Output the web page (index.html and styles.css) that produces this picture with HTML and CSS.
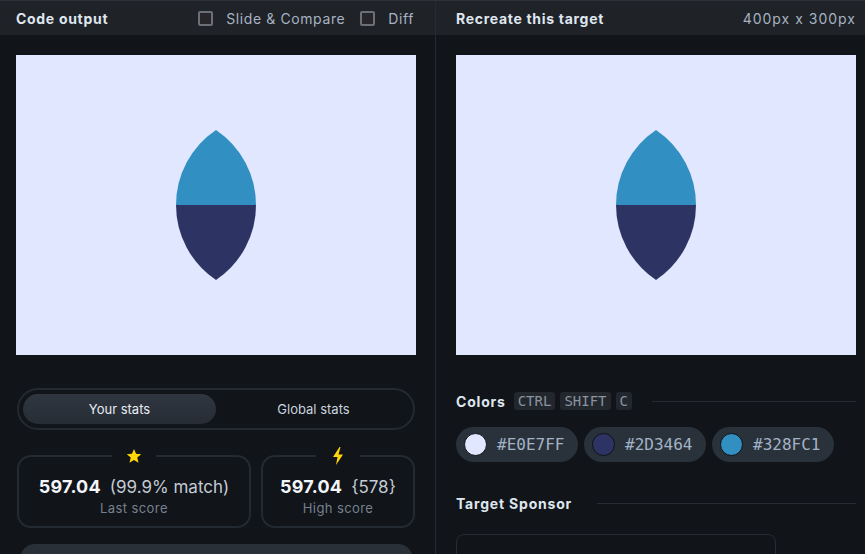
FILE: index.html
```html
<!DOCTYPE html>
<html>
<head>
<meta charset="utf-8">
<link rel="stylesheet" href="styles.css">
</head>
<body>
<div class="app">
  <section class="panel left">
    <header class="bar">
      <h2 class="title">Code output</h2>
      <div class="opts">
        <label class="opt"><span class="box"></span>Slide &amp; Compare</label>
        <label class="opt"><span class="box"></span>Diff</label>
      </div>
    </header>
    <div class="body">
      <div class="canvas">
        <svg class="leaf" width="80" height="150" viewBox="0 0 80 150">
          <path d="M40 0 A90.3 90.3 0 0 0 0 75 L80 75 A90.3 90.3 0 0 0 40 0 Z" fill="#328FC1"/>
          <path d="M0 75 A90.3 90.3 0 0 0 40 150 A90.3 90.3 0 0 0 80 75 Z" fill="#2D3464"/>
        </svg>
      </div>
      <div class="tabs">
        <div class="tab active">Your stats</div>
        <div class="tab">Global stats</div>
      </div>
      <div class="cards">
        <div class="card wide">
          <div class="badge">
            <svg width="16" height="16" viewBox="0 0 24 24"><path d="M12 1.5l3.1 7.2 7.7.6-5.9 5.1 1.8 7.6L12 17.9 5.3 22l1.8-7.6L1.2 9.3l7.7-.6z" fill="#FFD60A"/></svg>
          </div>
          <div class="score"><b>597.04</b><span>(99.9% match)</span></div>
          <div class="label">Last score</div>
        </div>
        <div class="card narrow">
          <div class="badge">
            <svg width="12" height="18" viewBox="0 0 12 18"><path d="M7.5 0 L1 10 H5.5 L4 18 L11 7.5 H6.5 L8.5 0 Z" fill="#FFD60A"/></svg>
          </div>
          <div class="score"><b>597.04</b><span>{578}</span></div>
          <div class="label">High score</div>
        </div>
      </div>
      <div class="more"></div>
    </div>
  </section>
  <section class="panel right">
    <header class="bar">
      <h2 class="title">Recreate this target</h2>
      <span class="dims">400px x 300px</span>
    </header>
    <div class="body">
      <div class="canvas">
        <svg class="leaf" width="80" height="150" viewBox="0 0 80 150">
          <path d="M40 0 A90.3 90.3 0 0 0 0 75 L80 75 A90.3 90.3 0 0 0 40 0 Z" fill="#328FC1"/>
          <path d="M0 75 A90.3 90.3 0 0 0 40 150 A90.3 90.3 0 0 0 80 75 Z" fill="#2D3464"/>
        </svg>
      </div>
      <div class="section-head colors-head">
        <h3>Colors</h3>
        <kbd>CTRL</kbd><kbd>SHIFT</kbd><kbd>C</kbd>
        <span class="rule"></span>
      </div>
      <div class="chips">
        <div class="chip"><span class="dot" style="background:#E0E7FF"></span>#E0E7FF</div>
        <div class="chip"><span class="dot" style="background:#2D3464"></span>#2D3464</div>
        <div class="chip"><span class="dot" style="background:#328FC1"></span>#328FC1</div>
      </div>
      <div class="section-head sponsor-head">
        <h3>Target Sponsor</h3>
        <span class="rule"></span>
      </div>
      <div class="sponsor"></div>
    </div>
  </section>
</div>
</body>
</html>
```
FILE: styles.css
```css
* { box-sizing: border-box; }
html, body { margin: 0; padding: 0; }
body {
  width: 865px;
  height: 554px;
  overflow: hidden;
  background: #111418;
  font-family: Inter, "Noto Sans", sans-serif;
  color: #dde4ee;
}
.app {
  display: flex;
  height: 554px;
  border-top: 1px solid #2c3038;
}
.panel { display: flex; flex-direction: column; }
.left { width: 436px; flex-shrink: 0; border-right: 1px solid #262a31; }
.right { flex: 1; }
.bar {
  flex-shrink: 0;
  height: 34px;
  background: #1f2227;
  display: flex;
  align-items: center;
  justify-content: space-between;
  padding: 0 21px 0 16px;
}
.right .bar { padding: 0 9px 0 20px; }
.title {
  margin: 0;
  font-size: 14px;
  font-weight: 700;
  color: #dfe6ef;
  letter-spacing: 0.7px;
}
.opts { display: flex; gap: 15px; }
.opt {
  display: flex;
  align-items: center;
  gap: 13px;
  font-size: 14px;
  color: #a7b3c2;
  letter-spacing: 0.6px;
}
.box {
  width: 15px;
  height: 15px;
  border: 2px solid #6a6f78;
  border-radius: 2px;
  background: #28262b;
}
.dims { font-size: 14px; color: #a7b3c2; letter-spacing: 1px; }
.body { flex-shrink: 0; padding: 20px 20px 0 16px; }
.right .body { padding: 20px 9px 0 20px; }
.canvas {
  width: 400px;
  height: 300px;
  background: #E0E7FF;
  display: flex;
  justify-content: center;
  padding-top: 75px;
}
.leaf { display: block; }
.tabs {
  margin: 33px 0 0 1px;
  width: 398px;
  height: 42px;
  border: 2px solid #242a31;
  border-radius: 21px;
  display: flex;
  padding: 4px;
}
.tab {
  flex: 1;
  display: flex;
  align-items: center;
  justify-content: center;
  font-size: 13px;
  color: #c9d3df;
  border-radius: 15px;
}
.tab.active {
  flex: 0 0 193px;
  background: linear-gradient(#2f3640, #272d35);
  color: #e6ecf3;
}
.tabs .tab:last-child { padding-left: 2px; }
.cards {
  display: flex;
  gap: 10px;
  margin: 25px 0 0 1px;
  width: 398px;
}
.card {
  position: relative;
  height: 73px;
  border: 2px solid #242a31;
  border-radius: 14px;
  display: flex;
  flex-direction: column;
  align-items: center;
  padding-top: 20px;
}
.wide { width: 234px; }
.narrow { flex: 1; }
.badge {
  position: absolute;
  top: -10px;
  left: 50%;
  transform: translateX(-50%);
  width: 44px;
  height: 18px;
  background: #111418;
  display: flex;
  align-items: center;
  justify-content: center;
}
.score {
  display: flex;
  align-items: baseline;
  gap: 9px;
  font-size: 17px;
  color: #c3cbd6;
  line-height: 20px;
}
.score b { font-size: 18px; color: #f3f6fa; font-weight: 700; letter-spacing: 0.2px; }
.label { font-size: 13px; color: #76818f; margin-top: 3px; letter-spacing: 0.4px; }
.more {
  margin: 16px 0 0 4px;
  width: 393px;
  height: 30px;
  border-radius: 16px;
  background: #2a3038;
}
.section-head {
  display: flex;
  align-items: center;
  gap: 5px;
}
.section-head h3 {
  margin: 0 3px 0 0;
  font-size: 14px;
  font-weight: 700;
  color: #dfe6ef;
  letter-spacing: 0.8px;
}
.colors-head { margin-top: 37px; }
kbd {
  font-family: "DejaVu Sans Mono", "Liberation Mono", monospace;
  font-size: 14px;
  font-weight: 400;
  color: #8a939f;
  background: #22272d;
  border-radius: 3px;
  padding: 1px 4px;
  line-height: 16px;
}
.rule {
  flex: 1;
  height: 1px;
  background: #272c33;
  margin-left: 15px;
}
.chips {
  display: flex;
  gap: 6px;
  margin-top: 17px;
}
.chip {
  width: 122px;
  height: 35px;
  border-radius: 18px;
  background: #29313a;
  display: flex;
  align-items: center;
  gap: 10px;
  padding-left: 8px;
  font-family: "DejaVu Sans Mono", "Liberation Mono", monospace;
  font-size: 16px;
  color: #a3b3c6;
}
.dot {
  width: 23px;
  height: 23px;
  border-radius: 50%;
  border: 1.5px solid #0f1114;
}
.sponsor-head { margin-top: 33px; }
.sponsor-head .rule { margin-left: 17px; }
.sponsor {
  margin-top: 22px;
  width: 320px;
  height: 40px;
  border: 1px solid #272c33;
  border-radius: 8px;
}
```
